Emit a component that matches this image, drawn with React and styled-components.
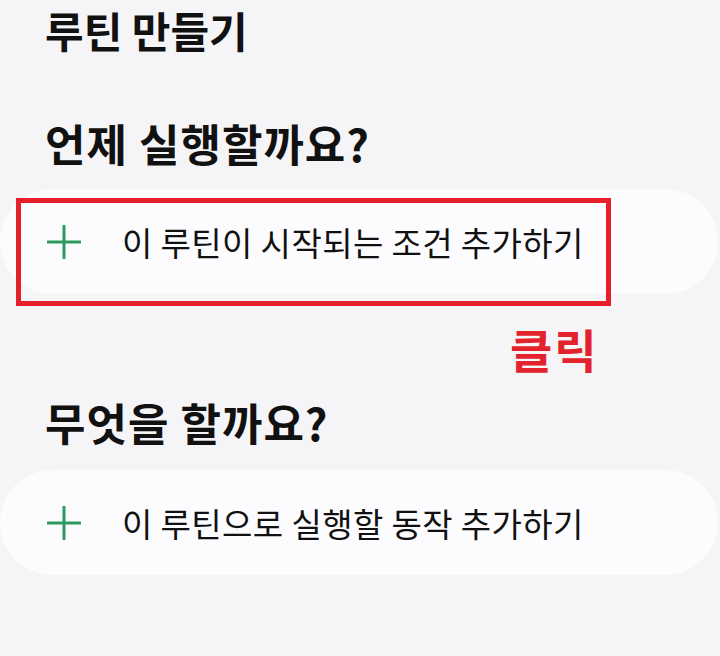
import React from "react";
import styled, { createGlobalStyle } from "styled-components";

const GlobalStyle = createGlobalStyle`
  html, body {
    margin: 0;
    padding: 0;
    background: #f5f5f7;
  }
  body {
    font-family: "Noto Sans CJK KR", "Noto Sans", sans-serif;
    color: #111;
  }
`;

const Page = styled.div`
  width: 720px;
  height: 656px;
  overflow: hidden;
  background: #f5f5f7;
`;

const Title = styled.h1`
  margin: 4px 0 0 45px;
  font-size: 42px;
  line-height: 52px;
  font-weight: 700;
  letter-spacing: 0;
`;

const SectionTitle = styled.h2`
  margin: ${props => props.top}px 0 0 45px;
  font-size: 44px;
  line-height: 52px;
  font-weight: 700;
  letter-spacing: 1px;
`;

const CardWrap = styled.div`
  position: relative;
  margin-top: ${props => props.top}px;
`;

const Card = styled.div`
  display: flex;
  align-items: center;
  gap: 41px;
  width: 718px;
  height: 105px;
  box-sizing: border-box;
  padding-left: 47px;
  background: #fcfcfe;
  border-radius: 53px;
`;

const CardText = styled.span`
  font-size: 33px;
  font-weight: 400;
  color: #111;
  letter-spacing: 0.4px;
`;

const Highlight = styled.div`
  position: absolute;
  left: 16px;
  top: 9px;
  width: 595px;
  height: 108px;
  box-sizing: border-box;
  border: 5px solid #e6202b;
  pointer-events: none;
`;

const ClickLabel = styled.div`
  margin: 29px 0 0 510px;
  font-size: 46px;
  line-height: 50px;
  font-weight: 700;
  color: #e3222c;
  letter-spacing: 2px;
`;

const PlusIcon = () => (
  <svg width="34" height="34" viewBox="0 0 34 34">
    <path
      d="M17 1v32M1 17h32"
      stroke="#2b9a60"
      strokeWidth="3"
      strokeLinecap="round"
      fill="none"
    />
  </svg>
);

const AddRow = ({ children }) => (
  <Card>
    <PlusIcon />
    <CardText>{children}</CardText>
  </Card>
);

export default function App() {
  return (
    <Page>
      <GlobalStyle />
      <Title>루틴 만들기</Title>
      <SectionTitle top={61}>언제 실행할까요?</SectionTitle>
      <CardWrap top={20}>
        <AddRow>이 루틴이 시작되는 조건 추가하기</AddRow>
        <Highlight />
      </CardWrap>
      <ClickLabel>클릭</ClickLabel>
      <SectionTitle top={23}>무엇을 할까요?</SectionTitle>
      <CardWrap top={22}>
        <AddRow>이 루틴으로 실행할 동작 추가하기</AddRow>
      </CardWrap>
    </Page>
  );
}
